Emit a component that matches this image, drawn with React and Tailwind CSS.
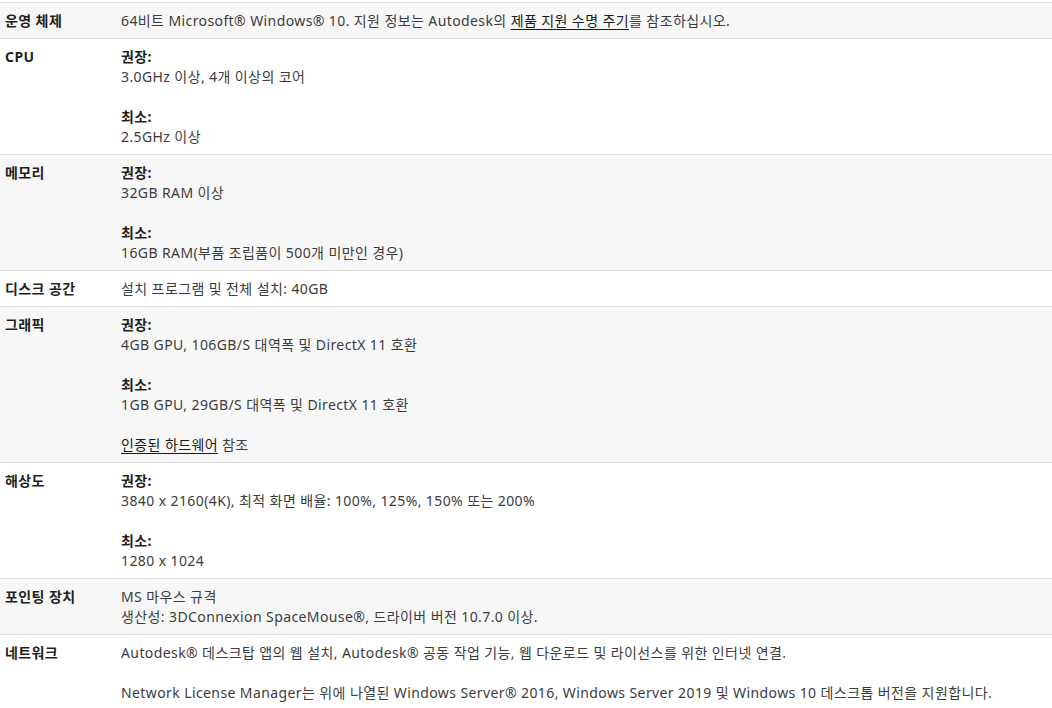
import React from 'react';

const Link = ({ children }) => (
	<span className="underline underline-offset-[3px] text-[#1a1a1a]">{children}</span>
);

const Label = ({ children }) => <div className="font-bold text-[#1f1f1f]">{children}</div>;

const rows = [
	{
		name: '운영 체제',
		body: (
			<p>
				64비트 Microsoft® Windows® 10. 지원 정보는 Autodesk의 <Link>제품 지원 수명 주기</Link>를 참조하십시오.
			</p>
		),
	},
	{
		name: 'CPU',
		body: (
			<>
				<Label>권장:</Label>
				<p>3.0GHz 이상, 4개 이상의 코어</p>
				<Label><span className="mt-5 block">최소:</span></Label>
				<p>2.5GHz 이상</p>
			</>
		),
	},
	{
		name: '메모리',
		body: (
			<>
				<Label>권장:</Label>
				<p>32GB RAM 이상</p>
				<Label><span className="mt-5 block">최소:</span></Label>
				<p>16GB RAM(부품 조립품이 500개 미만인 경우)</p>
			</>
		),
	},
	{
		name: '디스크 공간',
		body: <p>설치 프로그램 및 전체 설치: 40GB</p>,
	},
	{
		name: '그래픽',
		body: (
			<>
				<Label>권장:</Label>
				<p>4GB GPU, 106GB/S 대역폭 및 DirectX 11 호환</p>
				<Label><span className="mt-5 block">최소:</span></Label>
				<p>1GB GPU, 29GB/S 대역폭 및 DirectX 11 호환</p>
				<p className="mt-5">
					<Link>인증된 하드웨어</Link> 참조
				</p>
			</>
		),
	},
	{
		name: '해상도',
		body: (
			<>
				<Label>권장:</Label>
				<p>3840 x 2160(4K), 최적 화면 배율: 100%, 125%, 150% 또는 200%</p>
				<Label><span className="mt-5 block">최소:</span></Label>
				<p>1280 x 1024</p>
			</>
		),
	},
	{
		name: '포인팅 장치',
		body: (
			<>
				<p>MS 마우스 규격</p>
				<p>생산성: 3DConnexion SpaceMouse®, 드라이버 버전 10.7.0 이상.</p>
			</>
		),
	},
	{
		name: '네트워크',
		body: (
			<>
				<p>Autodesk® 데스크탑 앱의 웹 설치, Autodesk® 공동 작업 기능, 웹 다운로드 및 라이선스를 위한 인터넷 연결.</p>
				<p className="mt-5">
					Network License Manager는 위에 나열된 Windows Server® 2016, Windows Server 2019 및 Windows 10 데스크톱 버전을 지원합니다.
				</p>
			</>
		),
	},
];

export default function App() {
	return (
		<div
			className="min-h-screen bg-white pt-[2px] text-[14px] leading-5 tracking-[0.4px] text-[#3c3c3c]"
			style={{ fontFamily: '"Noto Sans", "Noto Sans CJK KR", sans-serif' }}
		>
			<div className="border-t border-[#e0e0e0]">
				{rows.map((row, i) => (
					<div
						key={row.name}
						className={`flex border-b border-[#e0e0e0] pt-2 pb-[7px] ${i % 2 === 0 ? 'bg-[#f7f7f7]' : 'bg-white'}`}
					>
						<div className="w-[121px] shrink-0 pl-[5px] font-bold text-[#1f1f1f]">{row.name}</div>
						<div className="flex-1">{row.body}</div>
					</div>
				))}
			</div>
		</div>
	);
}
